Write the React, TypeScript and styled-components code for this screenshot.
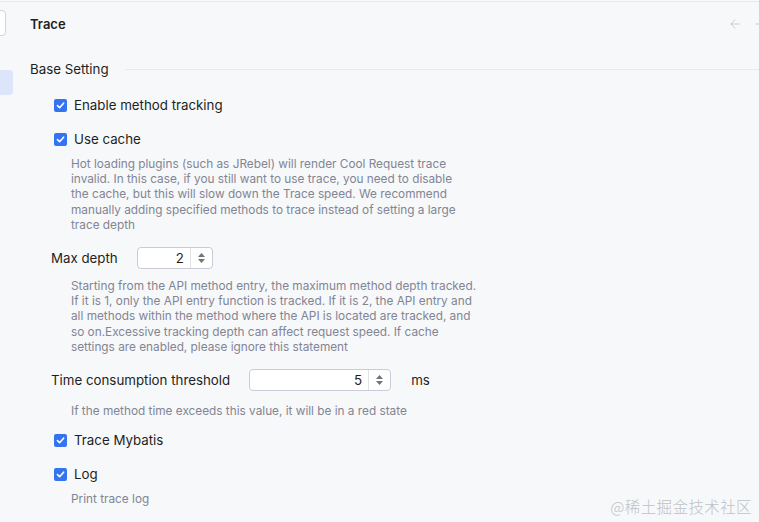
import React from "react";
import styled, { createGlobalStyle } from "styled-components";
import { ArrowLeft, ArrowRight } from "lucide-react";

const GlobalStyle = createGlobalStyle`
  html, body {
    margin: 0;
    padding: 0;
    background: #f7f8fa;
  }
  body {
    padding-top: 1px;
    font-family: Inter, "Noto Sans", sans-serif;
    color: #1e1f22;
    -webkit-font-smoothing: antialiased;
  }
`;

const Page = styled.div`
  display: flex;
  height: 520px;
  border-top: 1px solid #e9eaee;
  overflow: hidden;
  position: relative;
`;

const Sidebar = styled.div`
  width: 14px;
  flex-shrink: 0;
  display: flex;
  flex-direction: column;
`;

const SearchStub = styled.div`
  margin: 8px 0 0 -10px;
  width: 14px;
  height: 24px;
  background: #ffffff;
  border: 1px solid #d3d5db;
  border-radius: 4px;
`;

const SelectedItem = styled.div`
  margin-top: 34px;
  width: 13px;
  height: 25px;
  background: #dde5fa;
  border-radius: 0 4px 4px 0;
`;

const Main = styled.div`
  flex: 1;
  padding-left: 16px;
  display: flex;
  flex-direction: column;
`;

const Header = styled.div`
  height: 44px;
  display: flex;
  align-items: center;
  justify-content: space-between;
  margin-right: -8px;
`;

const Title = styled.div`
  font-size: 13px;
  font-weight: 600;
`;

const NavArrows = styled.div`
  display: flex;
  gap: 11px;
  color: #c3c6cd;
`;

const SectionTitle = styled.div`
  margin-top: 13px;
  height: 20px;
  display: flex;
  align-items: center;
  gap: 16px;
  font-size: 13.3px;

  &::after {
    content: "";
    flex: 1;
    height: 1px;
    background: #e9eaee;
  }
`;

const CheckRow = styled.label<{ $top: number }>`
  margin-top: ${(p) => p.$top}px;
  margin-left: 24px;
  height: 20px;
  display: flex;
  align-items: center;
  gap: 7px;
  font-size: 13.3px;
`;

const CheckBox = styled.span`
  width: 13px;
  height: 13px;
  border-radius: 2px;
  background: #3574f0;
  display: flex;
  align-items: center;
  justify-content: center;
`;

const Hint = styled.div<{ $top: number }>`
  margin-top: ${(p) => p.$top}px;
  margin-left: 41px;
  font-size: 11.8px;
  line-height: 15.2px;
  color: #818594;
`;

const HintLine = styled.span`
  display: block;
  white-space: nowrap;
`;

const FieldRow = styled.div<{ $top: number }>`
  margin-top: ${(p) => p.$top}px;
  margin-left: 21px;
  display: flex;
  align-items: center;
  gap: 19px;
  font-size: 13.3px;
`;

const Unit = styled.span`
  margin-left: 1px;
`;

const Spinner = styled.div<{ $width: number }>`
  width: ${(p) => p.$width}px;
  height: 22px;
  box-sizing: border-box;
  display: flex;
  background: #ffffff;
  border: 1px solid #c9ccd6;
  border-radius: 4px;
`;

const SpinValue = styled.div`
  flex: 1;
  display: flex;
  align-items: center;
  justify-content: flex-end;
  padding-right: 6px;
  font-size: 13.3px;
`;

const SpinButtons = styled.div`
  width: 21px;
  border-left: 1px solid #dfe1e5;
  display: flex;
  align-items: center;
  justify-content: center;
`;

const Watermark = styled.div`
  position: absolute;
  right: 7px;
  bottom: 5px;
  font-size: 15.5px;
  color: #bfc2c8;
  font-family: "Noto Sans CJK SC", sans-serif;
  font-weight: 300;
  letter-spacing: 0.4px;
`;

const cacheHint = [
  "Hot loading plugins (such as JRebel) will render Cool Request trace",
  "invalid. In this case, if you still want to use trace, you need to disable",
  "the cache, but this will slow down the Trace speed. We recommend",
  "manually adding specified methods to trace instead of setting a large",
  "trace depth",
];

const depthHint = [
  "Starting from the API method entry, the maximum method depth tracked.",
  "If it is 1, only the API entry function is tracked. If it is 2, the API entry and",
  "all methods within the method where the API is located are tracked, and",
  "so on.Excessive tracking depth can affect request speed. If cache",
  "settings are enabled, please ignore this statement",
];

const Check = () => (
  <CheckBox>
    <svg width="9" height="9" viewBox="0 0 9 9">
      <path d="M1.5 4.6 L3.6 6.7 L7.6 2.2" fill="none" stroke="#fff" strokeWidth="1.6" strokeLinecap="round" strokeLinejoin="round" />
    </svg>
  </CheckBox>
);

const SpinArrows = () => (
  <svg width="9" height="12" viewBox="0 0 9 12">
    <path d="M4.5 1 L8 5 L1 5 Z" fill="#6f737a" />
    <path d="M4.5 11 L8 7 L1 7 Z" fill="#6f737a" />
  </svg>
);

const NumberSpinner = ({ value, width }: { value: string; width: number }) => (
  <Spinner $width={width}>
    <SpinValue>{value}</SpinValue>
    <SpinButtons>
      <SpinArrows />
    </SpinButtons>
  </Spinner>
);

const HintText = ({ lines, top }: { lines: string[]; top: number }) => (
  <Hint $top={top}>
    {lines.map((line) => (
      <HintLine key={line}>{line}</HintLine>
    ))}
  </Hint>
);

export default function App() {
  return (
    <>
      <GlobalStyle />
      <Page>
        <Sidebar>
          <SearchStub />
          <SelectedItem />
        </Sidebar>
        <Main>
          <Header>
            <Title>Trace</Title>
            <NavArrows>
              <ArrowLeft size={14} strokeWidth={1.5} />
              <ArrowRight size={14} strokeWidth={1.5} />
            </NavArrows>
          </Header>
          <SectionTitle>Base Setting</SectionTitle>

          <CheckRow $top={16}>
            <Check />
            Enable method tracking
          </CheckRow>
          <CheckRow $top={14}>
            <Check />
            Use cache
          </CheckRow>
          <HintText lines={cacheHint} top={8} />

          <FieldRow $top={14}>
            Max depth
            <NumberSpinner value="2" width={76} />
          </FieldRow>
          <HintText lines={depthHint} top={10} />

          <FieldRow $top={14}>
            Time consumption threshold
            <NumberSpinner value="5" width={142} />
            <Unit>ms</Unit>
          </FieldRow>
          <HintText lines={["If the method time exceeds this value, it will be in a red state"]} top={13} />

          <CheckRow $top={11}>
            <Check />
            Trace Mybatis
          </CheckRow>
          <CheckRow $top={14}>
            <Check />
            Log
          </CheckRow>
          <HintText lines={["Print trace log"]} top={8} />
        </Main>
        <Watermark>@稀土掘金技术社区</Watermark>
      </Page>
    </>
  );
}
